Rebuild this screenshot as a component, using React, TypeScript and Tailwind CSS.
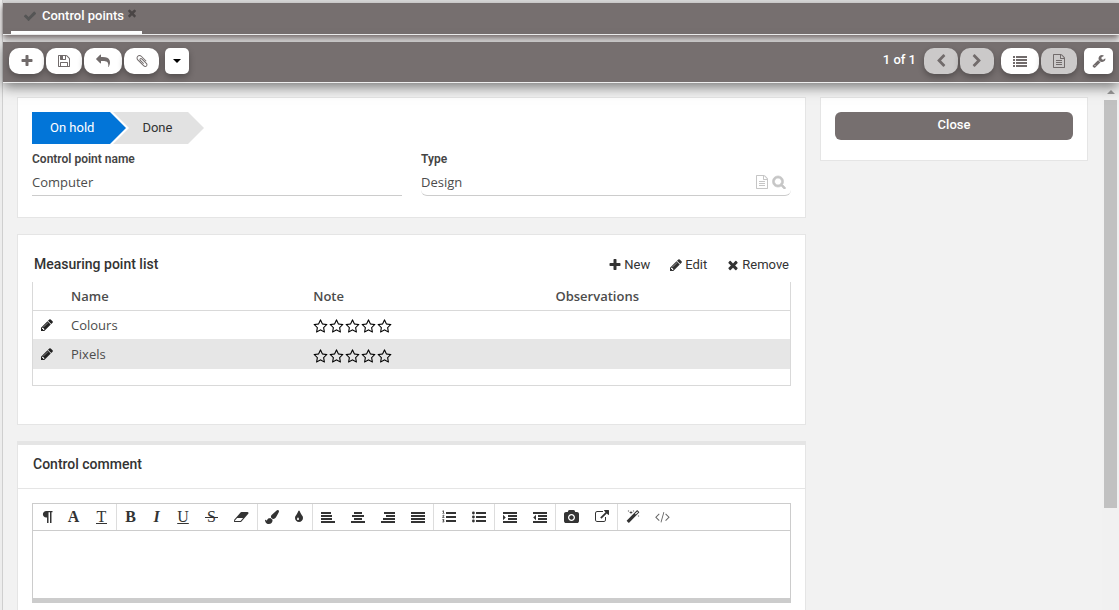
import type { ReactNode } from "react";

const paths = {
  plus: "M1600 736v192q0 40-28 68t-68 28h-416v416q0 40-28 68t-68 28h-192q-40 0-68-28t-28-68v-416h-416q-40 0-68-28t-28-68v-192q0-40 28-68t68-28h416v-416q0-40 28-68t68-28h192q40 0 68 28t28 68v416h416q40 0 68 28t28 68z",
  pencil: "M491 1536l91-91-235-235-91 91v107h128v128h107zm523-928q0-22-22-22-10 0-17 7l-542 542q-7 7-7 17 0 22 22 22 10 0 17-7l542-542q7-7 7-17zm-54-192l416 416-832 832h-416v-416zm683 96q0 53-37 90l-166 166-416-416 166-165q36-38 90-38 53 0 91 38l235 234q37 39 37 91z",
  times: "M1490 1322q0 40-28 68l-136 136q-28 28-68 28t-68-28l-294-294-294 294q-28 28-68 28t-68-28l-136-136q-28-28-28-68t28-68l294-294-294-294q-28-28-28-68t28-68l136-136q28-28 68-28t68 28l294 294 294-294q28-28 68-28t68 28l136 136q28 28 28 68t-28 68l-294 294 294 294q28 28 28 68z",
  check: "M1671 566q0 40-28 68l-724 724-136 136q-28 28-68 28t-68-28l-136-136-362-362q-28-28-28-68t28-68l136-136q28-28 68-28t68 28l294 295 656-657q28-28 68-28t68 28l136 136q28 28 28 68z",
  save: "M512 1536h768v-384h-768v384zm896 0h128v-896q0-14-10-38.5t-20-34.5l-281-281q-10-10-34-20t-39-10v416q0 40-28 68t-68 28h-576q-40 0-68-28t-28-68v-416h-128v1280h128v-416q0-40 28-68t68-28h832q40 0 68 28t28 68v416zm-384-928v-320q0-13-9.5-22.5t-22.5-9.5h-192q-13 0-22.5 9.5t-9.5 22.5v320q0 13 9.5 22.5t22.5 9.5h192q13 0 22.5-9.5t9.5-22.5zm640 32v928q0 40-28 68t-68 28h-1344q-40 0-68-28t-28-68v-1344q0-40 28-68t68-28h928q40 0 88 20t76 48l280 280q28 28 48 76t20 88z",
  share: "M1792 640q0 26-19 45l-512 512q-19 19-45 19t-45-19-19-45v-256h-224q-98 0-175.5 6t-154 21.5-133 42.5-105.5 69.5-80 101-48.5 138.5-17.5 181q0 55 5 123 0 6 2.5 23.5t2.5 26.5q0 15-8.5 25t-23.5 10q-16 0-28-17-7-9-13-22t-13.5-30-10.5-24q-127-285-127-451 0-199 53-333 162-403 875-403h224v-256q0-26 19-45t45-19 45 19l512 512q19 19 19 45z",
  wrench: "M448 1472q0-26-19-45t-45-19-45 19-19 45 19 45 45 19 45-19 19-45zm644-420l-682 682q-37 37-90 37-52 0-91-37l-106-108q-38-36-38-90 0-53 38-91l681-681q39 98 114.5 173.5t173.5 114.5zm634-435q0 39-23 106-47 134-164.5 217.5t-258.5 83.5q-185 0-316.5-131.5t-131.5-316.5 131.5-316.5 316.5-131.5q58 0 121.5 16.5t107.5 46.5q16 11 16 28t-16 28l-293 169v224l193 107q5-3 79-48.5t135.5-81 70.5-35.5q15 0 23.5 10t8.5 25z",
  clip: "M1596 1385q0 117-79 196t-196 79q-135 0-235-100l-777-776q-113-115-113-271 0-159 110-270t269-111q158 0 273 113l605 606q10 10 10 22 0 16-30.5 46.5t-46.5 30.5q-13 0-23-10l-606-607q-79-77-181-77-106 0-179 75t-73 181q0 105 76 181l776 777q63 63 145 63 64 0 106-42t42-106q0-82-63-145l-581-581q-26-24-60-24-29 0-48 19t-19 48q0 32 25 59l410 410q10 10 10 22 0 16-31 47t-47 31q-12 0-22-10l-410-410q-63-61-63-149 0-82 57-139t139-57q88 0 149 63l581 581q100 98 100 235z",
  left: "M1427 301l-531 531 531 531q19 19 19 45t-19 45l-166 166q-19 19-45 19t-45-19l-742-742q-19-19-19-45t19-45l742-742q19-19 45-19t45 19l166 166q19 19 19 45t-19 45z",
  right: "M1363 877l-742 742q-19 19-45 19t-45-19l-166-166q-19-19-19-45t19-45l531-531-531-531q-19-19-19-45t19-45l166-166q19-19 45-19t45 19l742 742q19 19 19 45t-19 45z",
  list: "M0 256h256v256h-256zM0 640h256v256h-256zM0 1024h256v256h-256zM0 1408h256v256h-256zM384 256h1408v256h-1408zM384 640h1408v256h-1408zM384 1024h1408v256h-1408zM384 1408h1408v256h-1408z",
  file: "M1596 380q28 28 48 76t20 88v1152q0 40-28 68t-68 28h-1344q-40 0-68-28t-28-68v-1600q0-40 28-68t68-28h896q40 0 88 20t76 48zm-444-244v376h376q-10-29-22-41l-313-313q-12-12-41-22zm384 1528v-1024h-416q-40 0-68-28t-28-68v-416h-768v1536h1280zm-1024-864q0-14 9-23t23-9h704q14 0 23 9t9 23v64q0 14-9 23t-23 9h-704q-14 0-23-9t-9-23v-64zm736 224q14 0 23 9t9 23v64q0 14-9 23t-23 9h-704q-14 0-23-9t-9-23v-64q0-14 9-23t23-9h704zm0 256q14 0 23 9t9 23v64q0 14-9 23t-23 9h-704q-14 0-23-9t-9-23v-64q0-14 9-23t23-9h704z",
  search: "M1216 832q0-185-131.5-316.5t-316.5-131.5-316.5 131.5-131.5 316.5 131.5 316.5 316.5 131.5 316.5-131.5 131.5-316.5zm512 832q0 52-38 90t-90 38q-54 0-90-38l-343-342q-179 124-399 124-143 0-273.5-55.5t-225-150-150-225-55.5-273.5 55.5-273.5 150-225 225-150 273.5-55.5 273.5 55.5 225 150 150 225 55.5 273.5q0 220-124 399l343 343q37 37 37 90z",
  star: "M1201 1004l306-297-422-62-189-382-189 382-422 62 306 297-73 421 378-199 377 199zm527-357q0 22-26 48l-363 354 86 500q1 7 1 20 0 50-41 50-19 0-40-12l-449-236-449 236q-22 12-40 12-21 0-31.5-14.5t-10.5-35.5q0-6 2-20l86-500-364-354q-25-27-25-48 0-37 56-46l502-73 225-455q19-41 49-41t49 41l225 455 502 73q56 9 56 46z",
  caret: "M384 640h1024l-512 512z",
  pilcrow: "M800 128h800v160h-130v1376h-190v-1376h-190v1376h-190v-704h-100q-190 0-310-115t-120-300q0-190 125-305t305-116z",
  eraser: "M832 1408l336-384h-768l-336 384h768zm1013-1077q15 34 9.5 71.5t-30.5 65.5l-896 1024q-38 44-96 44h-768q-38 0-69.5-20.5t-47.5-54.5q-15-34-9.5-71.5t30.5-65.5l896-1024q38-44 96-44h768q38 0 69.5 20.5t47.5 54.5z",
  brush: "M1615 0q70 0 122.5 46.5t52.5 116.5q0 63-45 151-332 629-465 752-97 91-218 91-126 0-216.5-92.5t-90.5-219.5q0-128 92-212l638-579q59-54 130-54zm-909 1034q39 76 106.5 130t150.5 76l1 71q4 213-129.5 347t-348.5 134q-123 0-218-46.5t-152.5-127.5-86.5-183-29-220q7 5 41 30t62 44.5 59 36.5 46 17q41 0 55-37 25-66 57.5-112.5t69.5-76 88-47.5 103-25.5 125-10.5z",
  tint: "M896 1152q0-36-20-69-1-1-15.5-22.5t-25.5-38-25-44-21-50.5q-4-16-21-16t-21 16q-7 23-21 50.5t-25 44-25.5 38-15.5 22.5q-20 33-20 69 0 53 37.5 90.5t90.5 37.5 90.5-37.5 37.5-90.5zm512-128q0 212-150 362t-362 150-362-150-150-362q0-145 81-275 6-9 62.5-90.5t101-151 99.5-178 83-201.5q9-30 34-47t51-17 51.5 17 33.5 47q28 93 83 201.5t99.5 178 101 151 62.5 90.5q81 127 81 275z",
  alignLeft: "M0 256h1280v256h-1280zM0 640h1408v256h-1408zM0 1024h1408v256h-1408zM0 1408h1792v256h-1792z",
  alignCenter: "M384 256h1024v256h-1024zM128 640h1536v256h-1536zM384 1024h1024v256h-1024zM0 1408h1792v256h-1792z",
  alignRight: "M384 256h1408v256h-1408zM640 640h1152v256h-1152zM256 1024h1536v256h-1536zM0 1408h1792v256h-1792z",
  justify: "M0 256h1792v256h-1792zM0 640h1792v256h-1792zM0 1024h1792v256h-1792zM0 1408h1792v256h-1792z",
  numbered: "M512 256h1280v256h-1280zM512 768h1280v256h-1280zM512 1280h1280v256h-1280zM120 60h110v320h90v80h-280v-80h90v-210l-60 50-50-60zM40 660q60-60 130-60 130 0 130 115 0 70-140 185h145v85h-275v-80q170-130 170-185 0-40-45-40-35 0-65 40zM50 1180h240v75l-80 85q100 15 100 115 0 140-165 140-80 0-125-45l45-70q40 32 80 32 60 0 60-50 0-60-110-55l-15-45 80-95h-110z",
  bullets: "M0 384a180 180 0 1 0 360 0a180 180 0 1 0-360 0M0 896a180 180 0 1 0 360 0a180 180 0 1 0-360 0M0 1408a180 180 0 1 0 360 0a180 180 0 1 0-360 0M512 256h1280v256h-1280zM512 768h1280v256h-1280zM512 1280h1280v256h-1280z",
  indent: "M0 256h1792v256h-1792zM640 640h1152v256h-1152zM640 1024h1152v256h-1152zM0 1408h1792v256h-1792zM0 608l352 352-352 352z",
  outdent: "M0 256h1792v256h-1792zM640 640h1152v256h-1152zM640 1024h1152v256h-1152zM0 1408h1792v256h-1792zM384 608l-352 352 352 352z",
  camera: "M960 672q119 0 203.5 84.5t84.5 203.5-84.5 203.5-203.5 84.5-203.5-84.5-84.5-203.5 84.5-203.5 203.5-84.5zm704-416q106 0 181 75t75 181v896q0 106-75 181t-181 75h-1408q-106 0-181-75t-75-181v-896q0-106 75-181t181-75h224l51-136q19-49 69.5-84.5t103.5-35.5h512q53 0 103.5 35.5t69.5 84.5l51 136h224zm-704 1152q185 0 316.5-131.5t131.5-316.5-131.5-316.5-316.5-131.5-316.5 131.5-131.5 316.5 131.5 316.5 316.5 131.5z",
  external: "M1408 928v320q0 119-84.5 203.5t-203.5 84.5h-832q-119 0-203.5-84.5t-84.5-203.5v-832q0-119 84.5-203.5t203.5-84.5h704q14 0 23 9t9 23v64q0 14-9 23t-23 9h-704q-66 0-113 47t-47 113v832q0 66 47 113t113 47h832q66 0 113-47t47-113v-320q0-14 9-23t23-9h64q14 0 23 9t9 23zm384-864v512q0 26-19 45t-45 19-45-19l-176-176-652 652q-10 10-23 10t-23-10l-114-114q-10-10-10-23t10-23l652-652-176-176q-19-19-19-45t19-45 45-19h512q26 0 45 19t19 45z",
  magic: "M1254 581l293-293-107-107-293 293zm447-293q0 27-18 45l-1286 1286q-18 18-45 18t-45-18l-198-198q-18-18-18-45t18-45l1286-1286q18-18 45-18t45 18l198 198q18 18 18 45zm-1351-190l98 30-98 30-30 98-30-98-98-30 98-30 30-98zm350 162l196 60-196 60-60 196-60-196-196-60 196-60 60-196zm930 478l98 30-98 30-30 98-30-98-98-30 98-30 30-98zm-640-640l98 30-98 30-30 98-30-98-98-30 98-30 30-98z",
  code: "M500 450l90 90-390 390 390 390-90 90-480-480zM1400 450l-90 90 390 390-390 390 90 90 480-480zM1080 250l110 35-370 1330-110-35z",
};

type IconName = keyof typeof paths;

function Icon({ name, className = "size-3.5" }: { name: IconName; className?: string }) {
  const wide = name === "eraser" || name === "camera" || name === "code";
  return (
    <svg aria-hidden="true" viewBox={wide ? "0 0 1920 1792" : "0 0 1792 1792"} className={`shrink-0 fill-current ${className}`}>
      <path d={paths[name]} />
    </svg>
  );
}

function ToolButton({ label, icon, className, iconClass }: { label: string; icon: IconName; className: string; iconClass?: string }) {
  return (
    <button
      type="button"
      aria-label={label}
      className={`flex h-[26px] items-center justify-center text-[#716b6b] shadow-[0_3px_6px_rgba(0,0,0,0.3)] ${className}`}
    >
      <Icon name={icon} className={iconClass} />
    </button>
  );
}

function Rating({ label }: { label: string }) {
  return (
    <div role="img" aria-label={label} className="flex gap-px pt-1 text-black">
      {[1, 2, 3, 4, 5].map((n) => (
        <Icon key={n} name="star" className="size-[15px]" />
      ))}
    </div>
  );
}

type Tool = { label: string; width: string; icon?: IconName; glyph?: ReactNode; iconClass?: string };

const toolGroups: Tool[][] = [
  [
    { label: "Style", width: "w-[27px]", icon: "pilcrow" },
    { label: "Font", width: "w-[27px]", glyph: <span className="font-bold">A</span> },
    { label: "Font size", width: "w-[29px]", glyph: <span className="border-b border-current px-px leading-[13px]">T</span> },
  ],
  [
    { label: "Bold", width: "w-[27px]", glyph: <span className="font-bold">B</span> },
    { label: "Italic", width: "w-[25px]", glyph: <span className="font-bold italic">I</span> },
    { label: "Underline", width: "w-7", glyph: <span className="underline">U</span> },
    {
      label: "Strikethrough",
      width: "w-[29px]",
      glyph: <span className="relative px-0.5 before:absolute before:inset-x-0 before:top-1/2 before:h-px before:bg-current">S</span>,
    },
    { label: "Clear format", width: "w-[31px]", icon: "eraser", iconClass: "h-3.5 w-[15px]" },
  ],
  [
    { label: "Highlight", width: "w-[27px]", icon: "brush" },
    { label: "Colour", width: "w-[27px]", icon: "tint" },
  ],
  [
    { label: "Align left", width: "w-[30px]", icon: "alignLeft" },
    { label: "Align centre", width: "w-[30px]", icon: "alignCenter" },
    { label: "Align right", width: "w-[30px]", icon: "alignRight" },
    { label: "Justify", width: "w-[30px]", icon: "justify" },
  ],
  [
    { label: "Numbered list", width: "w-[30px]", icon: "numbered" },
    { label: "Bulleted list", width: "w-[30px]", icon: "bullets" },
  ],
  [
    { label: "Indent", width: "w-[30px]", icon: "indent" },
    { label: "Outdent", width: "w-[30px]", icon: "outdent" },
  ],
  [
    { label: "Insert image", width: "w-[31px]", icon: "camera", iconClass: "h-3.5 w-[15px]" },
    { label: "Insert link", width: "w-[30px]", icon: "external" },
  ],
  [
    { label: "Normalise", width: "w-[29px]", icon: "magic" },
    { label: "Source", width: "w-[31px]", icon: "code", iconClass: "h-3.5 w-[15px] text-[#666]" },
  ],
];

const rows = ["Colours", "Pixels"];

export default function App() {
  return (
    <div className="flex h-screen bg-[#f2f2f2] font-['Open_Sans',sans-serif] text-[13px] text-[#4c4c4c]">
      <div className="w-[3px] shrink-0 border-r border-[#cfcfcf] bg-[#ededed]" />
      <div className="flex min-w-0 flex-1 flex-col border-t-[3px] border-[#d9d9d9]">
        <nav className="relative z-10 flex h-8 shrink-0 border-b border-[#eee] bg-[#766f6f] pl-2 font-[Roboto,sans-serif] shadow-[0_3px_6px_rgba(60,45,45,0.7)]">
          <div className="flex border-b-[3px] border-white pr-1 pl-3">
            <a href="#control-points" className="flex items-center gap-[5px] pb-0.5 text-[13px] leading-5 font-medium text-white">
              <Icon name="check" className="size-3.5 text-[#555]" />
              Control points
            </a>
            <button type="button" aria-label="Close tab" className="ml-0.5 flex items-start pt-1 text-[#4a4545]">
              <Icon name="times" className="size-3" />
            </button>
          </div>
        </nav>

        <header className="relative z-10 mt-[7px] flex h-[41px] shrink-0 items-center border-b border-[#eee] bg-[#766f6f] pr-1.5 pb-0.5 pl-1.5 shadow-[0_4px_12px_rgba(0,0,0,0.5)]">
          <div className="flex gap-0.5">
            <ToolButton label="New" icon="plus" className="w-[35px] rounded-[10px] bg-white" />
            <ToolButton label="Save" icon="save" className="w-9 rounded-[10px] bg-white" />
            <ToolButton label="Undo" icon="share" className="w-[38px] rounded-[10px] bg-white" iconClass="size-3.5 -scale-x-100" />
            <ToolButton label="Attachments" icon="clip" className="w-[35px] rounded-[10px] bg-white" />
          </div>
          <ToolButton label="More actions" icon="caret" className="ml-1.5 w-6 rounded-[5px] bg-white text-black" />
          <span className="mr-2 ml-auto pb-0.5 font-[Roboto,sans-serif] text-[13px] font-medium text-white">1 of 1</span>
          <div className="flex gap-0.5">
            <ToolButton label="Previous" icon="left" className="w-[34px] rounded-[10px] bg-[#cbc9c9]" />
            <ToolButton label="Next" icon="right" className="w-[34px] rounded-[10px] bg-[#cbc9c9]" />
          </div>
          <div className="mx-[7px] flex gap-0.5">
            <ToolButton label="List view" icon="list" className="w-[38px] rounded-[10px] bg-white" />
            <ToolButton label="Form view" icon="file" className="w-9 rounded-[10px] bg-[#cbc9c9]" />
          </div>
          <ToolButton label="Settings" icon="wrench" className="w-[29px] rounded-[5px] bg-white" />
        </header>

        <div className="flex min-h-0 flex-1">
          <main className="grid min-w-0 flex-1 grid-cols-[minmax(0,1fr)_268px] items-start gap-3.5 overflow-hidden px-3.5 pt-3.5">
            <div className="flex flex-col gap-4">
              <section className="border border-[#e5e5e5] bg-white px-3.5 pt-3.5 pb-[21px]">
                <ol className="flex h-8 text-[13px] leading-8">
                  <li className="relative z-10 flex font-[Roboto,sans-serif] text-white">
                    <span className="bg-[#0275d8] pr-4 pl-[18px]">On hold</span>
                    <svg aria-hidden="true" viewBox="0 0 19 32" className="h-8 w-[19px]">
                      <path d="M0 0h3l16 16L3 32H0z" fill="#fff" />
                      <path d="M0 0l16 16L0 32z" fill="#0275d8" />
                    </svg>
                  </li>
                  <li className="-ml-4 flex text-[#333]">
                    <span className="bg-[#e2e2e2] pr-4 pl-[29px] font-[Roboto,sans-serif]">Done</span>
                    <svg aria-hidden="true" viewBox="0 0 16 32" className="h-8 w-4">
                      <path d="M0 0l16 16L0 32z" fill="#e2e2e2" />
                    </svg>
                  </li>
                </ol>
                <div className="mt-1.5 grid grid-cols-2 gap-[19px]">
                  <div>
                    <label htmlFor="name" className="block font-[Roboto,sans-serif] text-xs leading-[18px] font-semibold text-[#444]">
                      Control point name
                    </label>
                    <input id="name" defaultValue="Computer" className="h-7 w-full border-b border-[#ccc] outline-none" />
                  </div>
                  <div>
                    <label htmlFor="type" className="block font-[Roboto,sans-serif] text-xs leading-[18px] font-semibold text-[#444]">
                      Type
                    </label>
                    <div className="flex h-7 items-center gap-[3px] rounded-b-md border-b border-[#ccc] pr-[5px] text-[#c6c6c6]">
                      <input id="type" defaultValue="Design" className="h-full min-w-0 flex-1 text-[#4c4c4c] outline-none" />
                      <button type="button" aria-label="Open record">
                        <Icon name="file" />
                      </button>
                      <button type="button" aria-label="Search">
                        <Icon name="search" className="size-3.5 stroke-current stroke-[90]" />
                      </button>
                    </div>
                  </div>
                </div>
              </section>

              <section className="border border-[#e5e5e5] bg-white px-3.5 pt-4 pb-[38px]">
                <div className="flex h-[31px] items-start justify-between font-[Roboto,sans-serif] leading-7">
                  <h2 className="pl-0.5 text-sm leading-[26px] font-medium text-[#333]">Measuring point list</h2>
                  <div className="flex gap-[19px] pr-0.5 text-[#333]">
                    <button type="button" className="flex items-center gap-0.5">
                      <Icon name="plus" />
                      New
                    </button>
                    <button type="button" className="flex items-center gap-0.5">
                      <Icon name="pencil" />
                      Edit
                    </button>
                    <button type="button" className="flex items-center gap-0.5">
                      <Icon name="times" />
                      Remove
                    </button>
                  </div>
                </div>
                <div className="border border-t-0 border-[#d9d9d9] pb-4">
                  <table className="w-full table-fixed border-collapse text-left">
                    <thead>
                      <tr className="h-7 border-b border-[#d9d9d9]">
                        <th scope="col" aria-label="Edit" className="w-[38px]" />
                        <th scope="col" className="w-[32%] pt-px font-semibold">Name</th>
                        <th scope="col" className="w-[32%] pt-px font-semibold">Note</th>
                        <th scope="col" className="pt-px font-semibold">Observations</th>
                      </tr>
                    </thead>
                    <tbody>
                      {rows.map((row) => (
                        <tr key={row} className="h-[29px] even:h-[30px] even:bg-[#e6e6e6]">
                          <td className="pl-[7px]">
                            <button type="button" aria-label={`Edit ${row}`} className="block text-[#222]">
                              <Icon name="pencil" />
                            </button>
                          </td>
                          <td className="pt-px">{row}</td>
                          <td>
                            <Rating label={`${row}: no rating`} />
                          </td>
                          <td />
                        </tr>
                      ))}
                    </tbody>
                  </table>
                </div>
              </section>

              <section className="border border-t-4 border-[#e5e5e5] bg-white">
                <h2 className="border-b border-[#e5e5e5] px-[15px] pt-1.5 pb-[11px] font-[Roboto,sans-serif] text-sm leading-[26px] font-medium text-[#333]">
                  Control comment
                </h2>
                <div className="p-3.5">
                  <div className="border border-b-[5px] border-[#ccc]">
                    <div role="toolbar" aria-label="Formatting" className="flex h-[27px] border-b border-[#ccc] font-['Liberation_Serif',serif] text-[16px] leading-none text-[#333]">
                      {toolGroups.map((group) => (
                        <div key={group[0].label} className="flex border-r border-[#ddd] last:border-r-0">
                          {group.map((tool) => (
                            <button key={tool.label} type="button" aria-label={tool.label} className={`flex items-center justify-center ${tool.width}`}>
                              {tool.icon ? <Icon name={tool.icon} className={tool.iconClass} /> : tool.glyph}
                            </button>
                          ))}
                        </div>
                      ))}
                    </div>
                    <textarea aria-label="Control comment" className="block h-[67px] w-full resize-none p-2 outline-none" />
                  </div>
                </div>
              </section>
            </div>

            <aside className="border border-[#e5e5e5] bg-white px-3.5 pt-3.5 pb-5">
              <button type="button" className="flex h-7 w-full justify-center rounded-md bg-[#766f6f] font-[Roboto,sans-serif] text-[13px] leading-[26px] font-medium text-white">
                Close
              </button>
            </aside>
          </main>

          <div aria-hidden="true" className="flex w-[17px] shrink-0 flex-col items-center bg-[#f1f1f1]">
            <div className="flex h-[17px] items-center">
              <svg viewBox="0 0 8 4" className="h-1 w-2 fill-[#999]">
                <path d="M4 0l4 4H0z" />
              </svg>
            </div>
            <div className="h-[77.5%] w-[13px] bg-[#c1c1c1]" />
          </div>
        </div>
      </div>
    </div>
  );
}
